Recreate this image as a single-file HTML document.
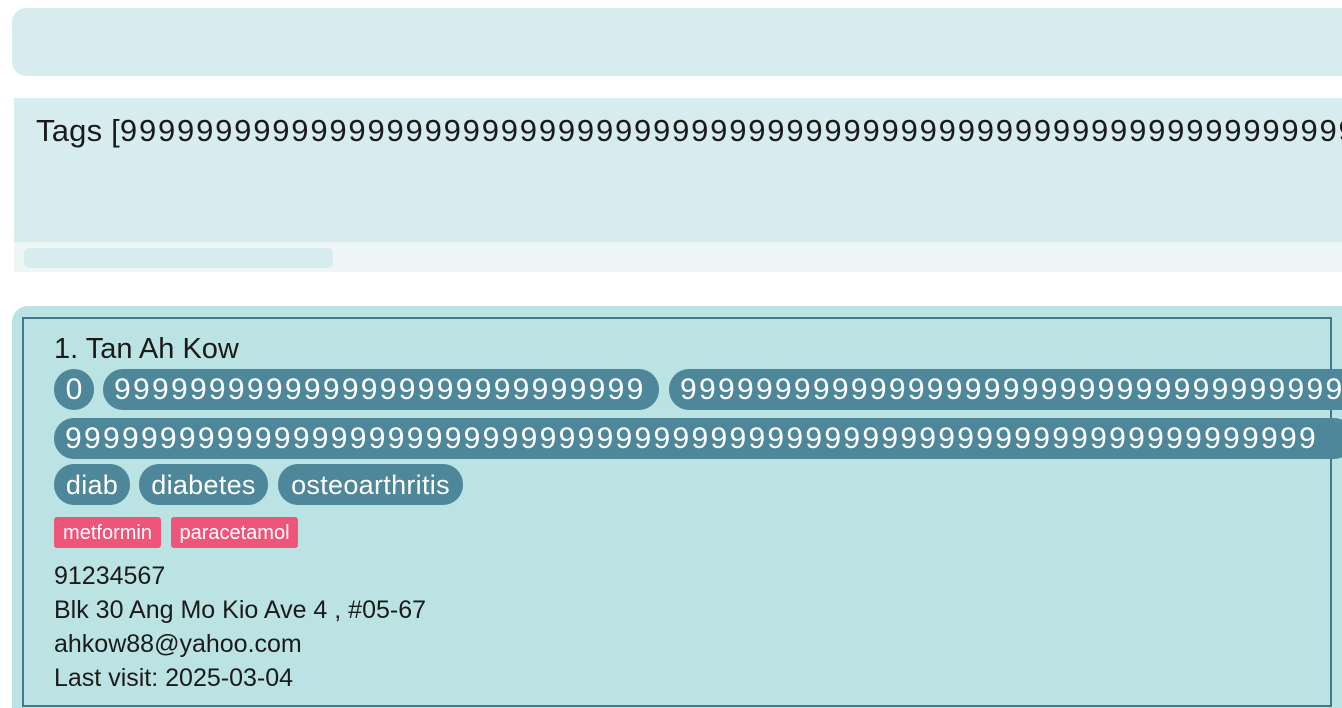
<!DOCTYPE html>
<html><head><style>
*{margin:0;padding:0;box-sizing:border-box}
html,body{width:1342px;height:708px;overflow:hidden}
body{background:#fff;font-family:"Liberation Sans",sans-serif;position:relative;color:#1a1a1a}
.a{position:absolute;white-space:nowrap}
.chip{position:absolute;height:41px;border-radius:20px;background:#4d8799;color:#fff;font-size:30px;line-height:42px;padding:0 11px;letter-spacing:2.3px;white-space:nowrap;overflow:hidden}
.w{letter-spacing:0.3px;font-size:27px}
.pk{position:absolute;top:517px;height:31px;background:#ef5579;color:#fff;border-radius:3px;font-size:20px;line-height:32px;padding:0 6px;white-space:nowrap}
.t{position:absolute;left:54px;font-size:25px;white-space:nowrap}
</style></head><body>
<div class="a" style="left:12px;top:8px;width:1345px;height:68px;border-radius:14px;background:#d7ecee"></div>
<div class="a" style="left:14px;top:98px;width:1330px;height:144px;background:#d7ecee;overflow:hidden">
<div class="a" style="left:22px;top:15px;font-size:31px;letter-spacing:0.2px">Tags [<span style="letter-spacing:1.8px;font-size:31px">9999999999999999999999999999999999999999999999999999999999999999999</span></div></div>
<div class="a" style="left:14px;top:242px;width:1330px;height:30px;background:#eff6f6"></div>
<div class="a" style="left:24px;top:248px;width:309px;height:20px;border-radius:5px;background:#d7ecee"></div>
<div class="a" style="left:12px;top:306px;width:1350px;height:420px;border-radius:16px;background:#bbe3e3"></div>
<div class="a" style="left:22px;top:317px;width:1310px;height:390px;border:2px solid #3f7a8c"></div>
<div class="a" style="left:54px;top:333px;font-size:29px">1. Tan Ah Kow</div>
<div class="chip" style="left:54px;top:369px;width:40px;padding:0;text-align:center;letter-spacing:0">0</div>
<div class="chip" style="left:103px;top:369px;width:556px">9999999999999999999999999999</div>
<div class="chip" style="left:669px;top:369px;width:700px">99999999999999999999999999999999999999</div>
<div class="chip" style="left:54px;top:418px;width:1300px">999999999999999999999999999999999999999999999999999999999999999999</div>
<div class="chip w" style="left:54px;top:464px;width:76px;text-align:center;padding:0">diab</div>
<div class="chip w" style="left:139px;top:464px;width:129px;text-align:center;padding:0">diabetes</div>
<div class="chip w" style="left:278px;top:464px;width:185px;text-align:center;padding:0">osteoarthritis</div>
<div class="pk" style="left:54px;width:107px;text-align:center;padding:0">metformin</div>
<div class="pk" style="left:171px;width:127px;text-align:center;padding:0">paracetamol</div>
<div class="t" style="top:562px">91234567</div>
<div class="t" style="top:596px">Blk 30 Ang Mo Kio Ave 4 , #05-67</div>
<div class="t" style="top:630px">ahkow88@yahoo.com</div>
<div class="t" style="top:664px">Last visit: 2025-03-04</div>
</body></html>
